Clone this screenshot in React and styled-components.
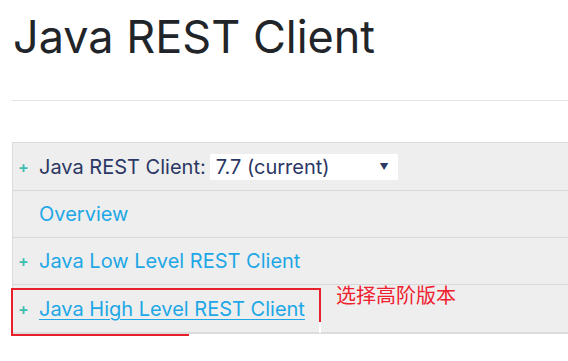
import React from 'react'
import styled, { createGlobalStyle } from 'styled-components'

const Global = createGlobalStyle`
  html, body {
    margin: 0;
    padding: 0;
    background: #fff;
    font-family: Inter, "Noto Sans", sans-serif;
  }
`

const Page = styled.div`
  position: relative;
  width: 568px;
  height: 361px;
  overflow: hidden;
  padding-left: 12px;
  box-sizing: border-box;
`

const Title = styled.h1`
  margin: 0;
  padding-top: 10px;
  padding-left: 1px;
  font-size: 45px;
  font-weight: 400;
  line-height: 54px;
  color: #212529;
`

const Rule = styled.hr`
  margin: 36px 0 0;
  border: none;
  border-top: 1px solid #e4e4e4;
`

const Panel = styled.div`
  margin-top: 41px;
  background: #eeeeee;
  border-top: 1px solid #dcdcdc;
  border-left: 1px solid #dcdcdc;
  border-bottom: 2px solid #dcdcdc;
`

const Row = styled.div`
  display: flex;
  align-items: center;
  height: ${p => p.$h || 46}px;
  border-top: ${p => (p.$first ? 'none' : '1px solid #d8d8d8')};
  font-size: 20px;
`

const Plus = styled.span`
  width: 26px;
  padding-left: 5px;
  box-sizing: border-box;
  color: #3ebeb0;
  font-size: 16px;
  font-weight: 600;
`

const Label = styled.span`
  color: #2b3764;
`

const Link = styled.a`
  color: #1ea7e6;
  text-decoration: ${p => (p.$under ? 'underline' : 'none')};
  text-underline-offset: 3px;
  text-decoration-thickness: 1px;
`

const Select = styled.div`
  display: flex;
  align-items: center;
  justify-content: space-between;
  margin-left: 4px;
  width: 188px;
  height: 26px;
  padding: 0 9px 0 6px;
  box-sizing: border-box;
  background: #fff;
  color: #2b3764;
`

const Caret = styled.span`
  font-size: 9px;
  color: #2b3764;
`

const Note = styled.span`
  position: absolute;
  left: 336px;
  top: 280px;
  font-family: "Noto Sans CJK SC", sans-serif;
  font-size: 20px;
  color: #f0212e;
`

const Mark = styled.div`
  position: absolute;
  left: 11px;
  top: 288px;
  width: 310px;
  height: 34px;
  border: 2px solid #e8202a;
  border-bottom: none;
  box-sizing: border-box;
`

const MarkTail = styled.div`
  position: absolute;
  left: 11px;
  top: 322px;
  width: 2px;
  height: 12px;
  background: #e8202a;
`

const MarkBase = styled.div`
  position: absolute;
  left: 11px;
  top: 334px;
  width: 178px;
  height: 2px;
  background: #e8202a;
`

const MarkGap = styled.div`
  position: absolute;
  left: 319px;
  top: 322px;
  width: 2px;
  height: 11px;
  background: #fff;
`

export default function App() {
  return (
    <Page>
      <Global />
      <Title>Java REST Client</Title>
      <Rule />
      <Panel>
        <Row $first $h={47}>
          <Plus>+</Plus>
          <Label>Java REST Client:</Label>
          <Select>
            <span>7.7 (current)</span>
            <Caret>▼</Caret>
          </Select>
        </Row>
        <Row>
          <Plus />
          <Link>Overview</Link>
        </Row>
        <Row>
          <Plus>+</Plus>
          <Link>Java Low Level REST Client</Link>
        </Row>
        <Row $h={47}>
          <Plus>+</Plus>
          <Link $under>Java High Level REST Client</Link>
        </Row>
      </Panel>
      <Mark />
      <MarkTail />
      <MarkBase />
      <MarkGap />
      <Note>选择高阶版本</Note>
    </Page>
  )
}
